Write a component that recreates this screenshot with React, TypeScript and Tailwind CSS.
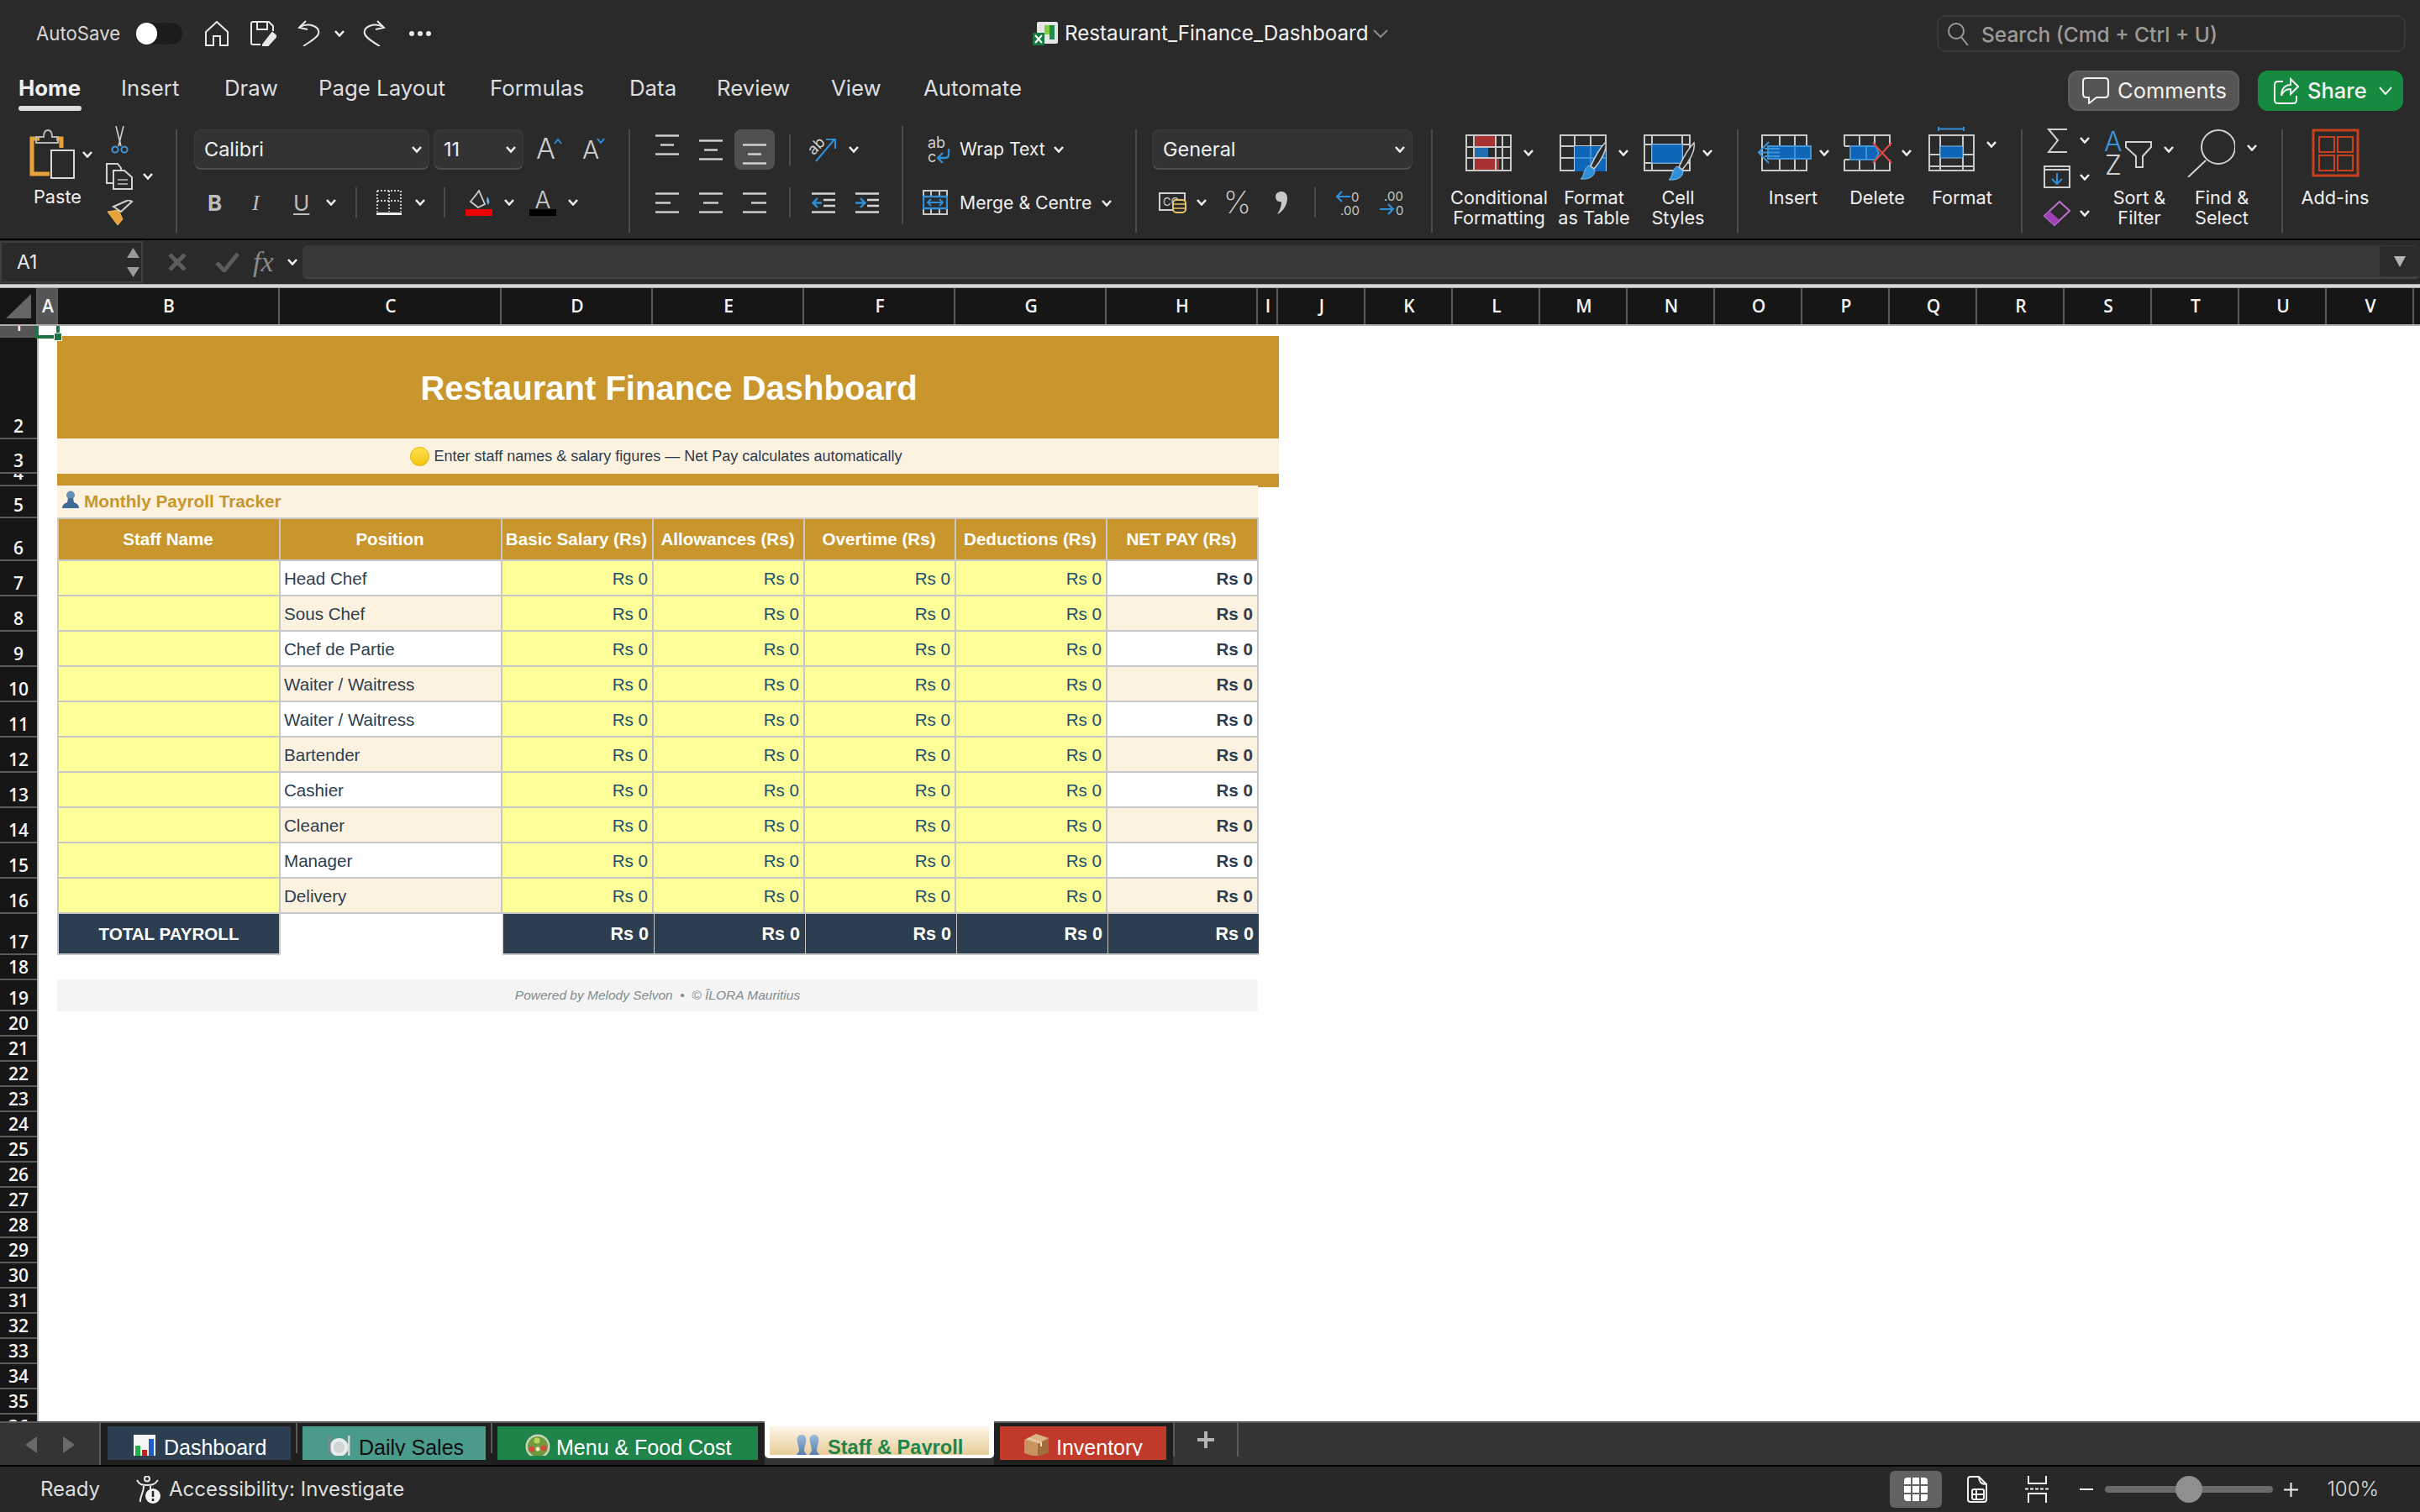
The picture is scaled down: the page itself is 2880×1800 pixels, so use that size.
import React from "react";

const Chev = ({ c = "" }: { c?: string }) => (
  <svg className={"w-[12px] h-[8px] shrink-0 " + c} viewBox="0 0 12 8" fill="none" stroke="#efefef" strokeWidth="2.6"><path d="M1 1 L6 6.5 L11 1" /></svg>
);
const L = "#d4d4d4";
const B = "#2f8fd8";
const Lines = ({ c, ws }: { c: string; ws: [number, number][] }) => (
  <svg className={"shrink-0 " + c} viewBox="0 0 28 25" fill="none" stroke={L} strokeWidth="2.4">
    {ws.map(([a, b], i) => <path key={i} d={`M${a} ${1.5 + i * 11} H${b}`} />)}
  </svg>
);
const VSep = ({ c }: { c: string }) => <div className={"w-[2px] shrink-0 bg-[#4c4c4c] " + c} />;
const RSep = ({ c = "mt-[4px]" }: { c?: string }) => <div className={"w-[2px] h-[123px] shrink-0 bg-[#4c4c4c] " + c} />;
const Combo = ({ c, t, p }: { c: string; t: string; p: string }) => (
  <div className={"h-[48px] shrink-0 rounded-[8px] bg-[#333333] border border-[#3c3c3c] border-b-[2px] border-b-[#4e4e4e] flex items-center justify-between text-[23.5px] text-[#f0f0f0] " + c + " " + p}>
    <span>{t}</span><Chev />
  </div>
);
const Grid = ({ x = 0, y = 0, w = 55, h = 44, vs, hs }: { x?: number; y?: number; w?: number; h?: number; vs: number[]; hs: number[] }) => (
  <g stroke="#c9c9c9" strokeWidth="2" fill="none">
    <rect x={x + 1} y={y + 1} width={w - 2} height={h - 2} />
    {vs.map((v) => <path key={"v" + v} d={`M${x + v} ${y} V${y + h}`} />)}
    {hs.map((v) => <path key={"h" + v} d={`M${x} ${y + v} H${x + w}`} />)}
  </g>
);
const Brush = ({ t }: { t: string }) => (
  <g transform={t}>
    <path d="M38 0 C40 10 31 24 24 32 L20 29 C24 20 31 7 38 0Z" fill="#2a2a2a" stroke="#cfcfcf" strokeWidth="1.6" />
    <path d="M18 28 L25 34 C25 41 18 45 8 44 C13 40 11 32 18 28Z" fill="#2f8fd8" stroke="#7fbdea" strokeWidth="1" />
  </g>
);
const BigBtn = ({ c, icon, lines, pt = "pt-[10px]", chev = true, gap = "gap-[14px]" }: { c: string; icon: React.ReactNode; lines: string[]; pt?: string; chev?: boolean; gap?: string }) => (
  <div className={"flex flex-col items-center shrink-0 " + c}>
    <div className={"h-[73px] flex items-start " + pt + " " + gap}>
      {icon}
      {chev && <Chev c="mt-[18px]" />}
    </div>
    {lines.map((l) => <div key={l} className="text-[21.7px] leading-[24px] text-[#eeeeee] whitespace-nowrap">{l}</div>)}
  </div>
);

/* emoji-like drawings */
const BarChart = () => (
  <svg className="w-[26px] h-[27px] shrink-0 -mt-[3px]" viewBox="0 0 26 27">
    <rect width="26" height="27" fill="#f4f6f8" />
    <rect x="2" y="13" width="6" height="14" fill="#1fb141" /><rect x="10" y="18" width="6" height="9" fill="#c9231f" /><rect x="18" y="5" width="6" height="22" fill="#1d5fc4" />
  </svg>
);
const Plate = () => (
  <svg className="w-[29px] h-[27px] shrink-0 -mt-[3px]" viewBox="0 0 29 27">
    <circle cx="14.5" cy="15" r="11" fill="#e8eaea" /><circle cx="14.5" cy="15" r="7.5" fill="#cfd4d4" stroke="#f7f7f7" />
    <rect x="1.5" y="2" width="3" height="25" fill="#7a8a8a" /><rect x="25" y="1" width="2.5" height="26" fill="#d0d8d8" />
  </svg>
);
const Salad = () => (
  <svg className="w-[30px] h-[30px] shrink-0 -mt-[3px]" viewBox="0 0 30 30">
    <circle cx="15" cy="15" r="14.5" fill="#c9d4b8" /><circle cx="15" cy="15" r="12" fill="#6f9a3e" />
    <circle cx="8" cy="18" r="3.5" fill="#d24a3c" /><circle cx="22" cy="17" r="3.5" fill="#d24a3c" /><circle cx="14" cy="8" r="3.5" fill="#b9d65a" /><circle cx="15" cy="18" r="2.5" fill="#e9efc0" />
  </svg>
);
const People = () => (
  <svg className="w-[29px] h-[28px] shrink-0 -mt-[3px]" viewBox="0 0 29 28">
    <defs><linearGradient id="pg" x1="0" y1="0" x2="0" y2="1"><stop offset="0" stopColor="#9dbcdc" /><stop offset="1" stopColor="#4a76a8" /></linearGradient></defs>
    <path d="M7 0 C12 0 13 5 12 9 C11 13 10 16 10 19 C11 22 14 24 14 27 H0 C0 24 3 22 4 19 C4 16 3 13 2 9 C1 5 2 0 7 0Z" fill="url(#pg)" />
    <path d="M22 0 C27 0 28 5 27 9 C26 13 25 16 25 19 C26 22 29 24 29 27 H15 C15 24 18 22 19 19 C19 16 18 13 17 9 C16 5 17 0 22 0Z" fill="url(#pg)" />
  </svg>
);
const Box = () => (
  <svg className="w-[31px] h-[28px] shrink-0 -mt-[4px]" viewBox="0 0 31 28">
    <path d="M1 7 L17 12 V28 L1 23Z" fill="#c8935c" /><path d="M17 12 L30 5 V22 L17 28Z" fill="#a36d3a" /><path d="M1 7 L15 0 L30 5 L17 12Z" fill="#dcb184" />
    <path d="M6 4.5 L22 10 V15 L20 15 V10.5 L5 5.5Z" fill="#eedcc4" />
  </svg>
);

const colHeads: [string, string][] = [["A", "w-[24px] bg-[#555555]"], ["B", "w-[264px]"], ["C", "w-[264px]"], ["D", "w-[180px]"], ["E", "w-[180px]"], ["F", "w-[180px]"], ["G", "w-[180px]"], ["H", "w-[180px]"], ["I", "w-[24px]"], ["J", "w-[104px]"], ["K", "w-[104px]"], ["L", "w-[104px]"], ["M", "w-[104px]"], ["N", "w-[104px]"], ["O", "w-[104px]"], ["P", "w-[104px]"], ["Q", "w-[104px]"], ["R", "w-[104px]"], ["S", "w-[104px]"], ["T", "w-[104px]"], ["U", "w-[104px]"], ["V", "w-[104px]"]];

const rowHeads: [number, string][] = [
  [1, "h-[14px] bg-[#555555]"], [2, "h-[121px]"], [3, "h-[41px]"], [4, "h-[15px]"], [5, "h-[38px]"], [6, "h-[51px]"],
  ...[7, 8, 9, 10, 11, 12, 13, 14, 15, 16].map((n) => [n, "h-[42px]"] as [number, string]),
  [17, "h-[49px]"], [18, "h-[30px]"], [19, "h-[37px]"],
  ...Array.from({ length: 17 }, (_, i) => [20 + i, "h-[30px]"] as [number, string]),
];

const positions = ["Head Chef", "Sous Chef", "Chef de Partie", "Waiter / Waitress", "Waiter / Waitress", "Bartender", "Cashier", "Cleaner", "Manager", "Delivery"];
const heads = ["Staff Name", "Position", "Basic Salary (Rs)", "Allowances (Rs)", "Overtime (Rs)", "Deductions (Rs)", "NET PAY (Rs)"];
const cols = "grid grid-cols-[264px_264px_180px_180px_180px_180px_180px]";
const cell = "border-r-2 border-b-2 border-[#c8c8c8] flex items-center";

const Rs = ({ alt }: { alt: boolean }) => (
  <>
    {[0, 1, 2, 3].map((i) => <div key={i} className={cell + " justify-end pr-[5px] pt-[2px] bg-[#ffff99] text-[#1a5276]"}>Rs 0</div>)}
    <div className={cell + " justify-end pr-[5px] pt-[2px] font-bold text-[#2c3e50] " + (alt ? "bg-[#fdf2df]" : "bg-white")}>Rs 0</div>
  </>
);

export default function App() {
  return (
    <div className="w-[2880px] h-[1800px] overflow-hidden bg-[#2a2a2a] flex flex-col font-['Inter',sans-serif] text-[#e8e8e8]">
      {/* Title bar */}
      <div className="h-[80px] shrink-0 flex items-center">
        <div className="w-[1229px] shrink-0 flex items-center">
          <span className="ml-[43px] w-[119px] shrink-0 text-[22.2px] text-[#d8d8d8] whitespace-nowrap">AutoSave</span>
          <div className="w-[55px] h-[26px] rounded-full bg-[#1c1c1c] flex items-center"><div className="w-[25px] h-[26px] rounded-full bg-white" /></div>
          <svg className="ml-[27px] w-[28px] h-[30px]" viewBox="0 0 28 30" fill="none" stroke="#e8e8e8" strokeWidth="2"><path d="M1 13 L14 1 L27 13 V29 H18 V18 H10 V29 H1Z" /></svg>
          <svg className="ml-[26px] w-[31px] h-[30px]" viewBox="0 0 31 30" fill="none" stroke="#e8e8e8" strokeWidth="2"><path d="M12 28 H3 Q1 28 1 26 V3 Q1 1 3 1 H22 L27 6 V12" /><path d="M8 1 V10 H20 V1" /><path d="M15 28 L26 14 L31 18 L20 30 L15 30Z" fill="#e8e8e8" /></svg>
          <svg className="ml-[25px] w-[27px] h-[31px]" viewBox="0 0 27 31" fill="none" stroke="#e8e8e8" strokeWidth="2"><path d="M10 1 L2 9 L12 11" /><path d="M3 8 C14 2 27 8 25 16 C24 21 14 26 7 31" /></svg>
          <Chev c="ml-[17px]" />
          <svg className="ml-[22px] w-[27px] h-[31px]" viewBox="0 0 27 31" fill="none" stroke="#e8e8e8" strokeWidth="2"><path d="M17 1 L25 9 L15 11" /><path d="M24 8 C13 2 0 8 2 16 C3 21 12 26 20 31" /></svg>
          <svg className="ml-[28px] w-[26px] h-[6px]" viewBox="0 0 26 6" fill="#e8e8e8"><circle cx="3" cy="3" r="3" /><circle cx="13" cy="3" r="3" /><circle cx="23" cy="3" r="3" /></svg>
        </div>
        <svg className="w-[30px] h-[28px] shrink-0" viewBox="0 0 30 28">
          <rect x="5" y="0" width="25" height="26" rx="2" fill="#e6e6e6" /><rect x="14" y="4" width="6" height="11" fill="#7fd13b" /><rect x="20" y="4" width="6" height="17" fill="#1f8a4c" /><rect x="0" y="13" width="14" height="15" rx="1" fill="#127a3f" />
          <path d="M3 16 L11 25 M11 16 L3 25" stroke="#fff" strokeWidth="2" />
        </svg>
        <span className="ml-[8px] w-[367px] shrink-0 text-[24.2px] text-[#f2f2f2] whitespace-nowrap">Restaurant_Finance_Dashboard</span>
        <svg className="w-[18px] h-[10px] shrink-0" viewBox="0 0 18 10" fill="none" stroke="#8a8a8a" strokeWidth="2"><path d="M1 1 L9 9 L17 1" /></svg>
        <div className="ml-auto mr-[17px] w-[558px] h-[44px] rounded-[10px] border-2 border-[#383838] flex items-center">
          <svg className="ml-[11px] w-[25px] h-[27px]" viewBox="0 0 25 27" fill="none" stroke="#9a9a9a" strokeWidth="2"><circle cx="10" cy="10" r="9" /><path d="M16 17 L24 27" /></svg>
          <span className="ml-[15px] pt-[2px] text-[24.5px] font-medium text-[#9b9b9b] whitespace-nowrap">Search (Cmd + Ctrl + U)</span>
        </div>
      </div>
      {/* Tabs */}
      <div className="h-[70px] shrink-0 flex pt-[4px] text-[25.8px] text-[#dedede]">
        <div className="ml-[22px] w-[75px] flex flex-col"><div className="h-[42px] flex items-center font-bold text-[#efefef]">Home</div><div className="h-[6px] rounded-full bg-[#dddddd]" /></div>
        <div className="ml-[47px] w-[72px] h-[42px] flex items-center">Insert</div>
        <div className="ml-[51px] w-[62px] h-[42px] flex items-center">Draw</div>
        <div className="ml-[50px] w-[151px] h-[42px] flex items-center whitespace-nowrap">Page Layout</div>
        <div className="ml-[53px] w-[114px] h-[42px] flex items-center">Formulas</div>
        <div className="ml-[52px] w-[56px] h-[42px] flex items-center">Data</div>
        <div className="ml-[48px] w-[87px] h-[42px] flex items-center">Review</div>
        <div className="ml-[49px] w-[60px] h-[42px] flex items-center">View</div>
        <div className="ml-[50px] w-[118px] h-[42px] flex items-center">Automate</div>
        <div className="ml-auto mr-[20px] flex gap-[22px]">
          <div className="w-[204px] h-[48px] rounded-[12px] bg-[#555555] border-2 border-[#5f5f5f] flex items-center text-[#f2f2f2]">
            <svg className="ml-[15px] w-[32px] h-[32px]" viewBox="0 0 32 32" fill="none" stroke="#f0f0f0" strokeWidth="2"><path d="M5 1 H27 Q31 1 31 5 V20 Q31 24 27 24 H17 L8 31 V24 H5 Q1 24 1 20 V5 Q1 1 5 1Z" /></svg>
            <span className="ml-[10px] text-[25.5px]">Comments</span>
          </div>
          <div className="w-[173px] h-[48px] rounded-[12px] bg-[#168a3e] flex items-center text-[#f4f4f4]">
            <svg className="ml-[19px] w-[30px] h-[32px]" viewBox="0 0 30 32" fill="none" stroke="#f0f0f0" strokeWidth="2"><path d="M11 5 H5 Q1 5 1 9 V27 Q1 31 5 31 H23 Q27 31 27 27 V22" /><path d="M9 22 C9 12 15 9 20 9 V2 L29 11 L20 20 V14 C15 14 11 16 9 22Z" /></svg>
            <span className="ml-[10px] text-[25.5px] font-medium">Share</span>
            <svg className="ml-[14px] w-[16px] h-[10px]" viewBox="0 0 16 10" fill="none" stroke="#f0f0f0" strokeWidth="2"><path d="M1 1 L8 9 L15 1" /></svg>
          </div>
        </div>
      </div>
      {/* Ribbon */}
      <div className="h-[134px] shrink-0 flex overflow-hidden">
        {/* Clipboard */}
        <div className="w-[209px] shrink-0 flex">
          <div className="ml-[30px] w-[58px] shrink-0 flex flex-col items-start">
            <svg className="ml-[5px] mt-[4px] w-[54px] h-[59px] overflow-visible" viewBox="0 0 54 59" fill="none">
              <path d="M12 11 H3 V53 H24" stroke="#e8a23a" strokeWidth="5" /><path d="M32 11 H38 V22" stroke="#e8a23a" strokeWidth="5" />
              <path d="M8 16 V9 H17 Q17 1 22 1 Q27 1 27 9 H34 V16Z" stroke="#b5b5b5" strokeWidth="2" />
              <rect x="26" y="25" width="27" height="33" stroke="#d9d9d9" strokeWidth="2" fill="#2a2a2a" />
            </svg>
            <span className="mt-[9px] ml-[10px] text-[21.7px] leading-[24px] text-[#eeeeee]">Paste</span>
          </div>
          <Chev c="ml-[10px] mt-[30px]" />
          <div className="ml-[16px] w-[60px] shrink-0 flex flex-col">
            <svg className="ml-[6px] mt-0 w-[21px] h-[33px]" viewBox="0 0 21 33" fill="none"><path d="M6 0 L12 24 M15 0 L9 24" stroke="#d2d2d2" strokeWidth="1.6" /><circle cx="5" cy="28" r="3.6" stroke="#3d94d6" strokeWidth="2" /><circle cx="16" cy="28" r="3.6" stroke="#3d94d6" strokeWidth="2" /></svg>
            <div className="mt-[11px] flex items-center">
              <svg className="w-[32px] h-[32px]" viewBox="0 0 32 32" fill="none" stroke="#d2d2d2" strokeWidth="2"><path d="M8 24 H1 V1 H14 L18 6 V9" /><path d="M9 9 H22 L31 17 V31 H9Z" /><path d="M14 20 H26 M14 25 H26" stroke="#999" /></svg>
              <Chev c="ml-[12px]" />
            </div>
            <svg className="mt-[12px] ml-[1px] w-[32px] h-[30px]" viewBox="0 0 32 30"><path d="M1 14 L13 30 L19 23 L14 12Z" fill="#e8a23a" stroke="#f0b95a" /><path d="M8 8 L17 14 L30 2 L26 0Z" fill="#2a2a2a" stroke="#d2d2d2" strokeWidth="2" /></svg>
          </div>
        </div>
        <RSep />
        {/* Font */}
        <div className="w-[537px] shrink-0 flex flex-col pt-[4px]">
          <div className="h-[48px] flex items-center">
            <Combo c="ml-[20px] w-[280px]" t="Calibri" p="pl-[11px] pr-[8px]" />
            <Combo c="ml-[5px] w-[107px]" t="11" p="pl-[11px] pr-[8px]" />
            <svg className="ml-[15px] w-[31px] h-[30px] overflow-visible" viewBox="0 0 31 30"><text x="0" y="26" fontSize="34" fontWeight="300" fill="#cfcfcf" fontFamily="Inter">A</text><path d="M22 8 L26 3 L30 8" fill="none" stroke={B} strokeWidth="2" /></svg>
            <svg className="ml-[24px] w-[27px] h-[30px] overflow-visible" viewBox="0 0 27 30"><text x="0" y="26" fontSize="30" fontWeight="300" fill="#cfcfcf" fontFamily="Inter">A</text><path d="M18 2 L22 7 L26 2" fill="none" stroke={B} strokeWidth="2" /></svg>
          </div>
          <div className="mt-[15px] h-[48px] flex items-center">
            <span className="ml-[36px] w-[15px] text-[26px] font-bold text-[#bdbdbd]">B</span>
            <span className="ml-[38px] w-[12px] text-[26px] italic font-['Liberation_Serif',serif] text-[#bdbdbd]">I</span>
            <span className="ml-[37px] w-[17px] text-[26px] underline underline-offset-[3px] text-[#bdbdbd]">U</span>
            <Chev c="ml-[22px]" />
            <VSep c="ml-[23px] h-[36px]" />
            <svg className="ml-[23px] w-[30px] h-[30px]" viewBox="0 0 30 30" fill="none"><path d="M1 1 H29 V26 M1 1 V26 M15 1 V26 M1 13 H29" stroke="#c9c9c9" strokeWidth="2" strokeDasharray="2 2" /><path d="M0 28.5 H30" stroke="#eeeeee" strokeWidth="3" /></svg>
            <Chev c="ml-[16px]" />
            <VSep c="ml-[22px] h-[36px]" />
            <svg className="ml-[24px] w-[32px] h-[31px]" viewBox="0 0 32 31" fill="none"><path d="M16 1 L23 17 L15 21 L6 14 L14 4Z" stroke="#d0d0d0" strokeWidth="1.8" /><path d="M26 8 Q30 14 27 18 Q24 14 26 8Z" fill="#6db3e8" /><rect x="0" y="23" width="32" height="8" fill="#ee0000" /></svg>
            <Chev c="ml-[14px]" />
            <div className="ml-[18px] w-[32px] h-[31px] flex flex-col items-center">
              <span className="h-[23px] text-[28px] leading-[24px] font-light text-[#cfcfcf]">A</span>
              <div className="w-[32px] h-[8px] bg-black" />
            </div>
            <Chev c="ml-[14px]" />
          </div>
        </div>
        <RSep />
        {/* Alignment */}
        <div className="w-[323px] shrink-0 flex flex-col pt-[4px]">
          <div className="h-[48px] flex items-center">
            <Lines c="ml-[30px] w-[28px] h-[25px] -mt-[12px]" ws={[[0, 28], [6, 22], [0, 28]]} />
            <Lines c="ml-[24px] w-[28px] h-[25px]" ws={[[0, 28], [6, 22], [0, 28]]} />
            <div className="ml-[14px] w-[48px] h-[48px] rounded-[8px] bg-[#505050] flex items-center justify-center">
              <Lines c="w-[28px] h-[25px] mt-[10px]" ws={[[0, 28], [6, 22], [0, 28]]} />
            </div>
            <VSep c="ml-[17px] h-[37px]" />
            <svg className="ml-[22px] w-[34px] h-[30px]" viewBox="0 0 34 30" fill="none"><text x="0" y="18" transform="rotate(-45 8 14)" fontSize="18" fill="#d2d2d2" fontFamily="Inter">ab</text><path d="M8 29 L30 3 M20 3 H31 V14" stroke={B} strokeWidth="2" /></svg>
            <Chev c="ml-[13px]" />
          </div>
          <div className="mt-[15px] h-[48px] flex items-center">
            <Lines c="ml-[30px] w-[28px] h-[25px]" ws={[[0, 28], [0, 18], [0, 28]]} />
            <Lines c="ml-[24px] w-[28px] h-[25px]" ws={[[0, 28], [5, 23], [0, 28]]} />
            <Lines c="ml-[24px] w-[28px] h-[25px]" ws={[[0, 28], [10, 28], [0, 28]]} />
            <VSep c="ml-[27px] h-[36px]" />
            <svg className="ml-[25px] w-[28px] h-[25px]" viewBox="0 0 28 25" fill="none"><path d="M0 1.5 H28 M0 23.5 H28 M14 9 H28 M14 16 H28" stroke={L} strokeWidth="2.4" /><path d="M12 12.5 H2 M7 7 L1.5 12.5 L7 18" stroke={B} strokeWidth="2.4" /></svg>
            <svg className="ml-[24px] w-[28px] h-[25px]" viewBox="0 0 28 25" fill="none"><path d="M0 1.5 H28 M0 23.5 H28 M14 9 H28 M14 16 H28" stroke={L} strokeWidth="2.4" /><path d="M0 12.5 H11 M6 7 L11.5 12.5 L6 18" stroke={B} strokeWidth="2.4" /></svg>
          </div>
        </div>
        <RSep c="-mt-[6px] h-[123px]" />
        {/* Wrap */}
        <div className="w-[276px] shrink-0 flex flex-col pt-[4px] text-[21.2px] text-[#eeeeee]">
          <div className="h-[48px] flex items-center">
            <svg className="ml-[28px] w-[28px] h-[32px]" viewBox="0 0 28 32" fill="none"><text x="1" y="14" fontSize="18" fill="#d0d0d0" fontFamily="Inter">ab</text><text x="1" y="31" fontSize="18" fill="#d0d0d0" fontFamily="Inter">c</text><path d="M26 15 V22 Q26 26 22 26 H14 M19 20 L13 26 L19 32" stroke={B} strokeWidth="2.4" /></svg>
            <span className="ml-[11px] w-[101px] whitespace-nowrap">Wrap Text</span>
            <Chev c="ml-[11px]" />
          </div>
          <div className="mt-[16px] h-[48px] flex items-center">
            <svg className="ml-[23px] w-[30px] h-[30px] -mt-[2px]" viewBox="0 0 30 30" fill="none"><path d="M1 1 H29 V29 H1Z M1 8 H29 M1 22 H29 M10 1 V8 M20 1 V8 M10 22 V29 M20 22 V29" stroke="#c9c9c9" strokeWidth="2" /><rect x="1" y="8" width="28" height="14" stroke={B} strokeWidth="2.4" /><path d="M6 15 H24 M10 11 L6 15 L10 19 M20 11 L24 15 L20 19" stroke={B} strokeWidth="2" /></svg>
            <span className="ml-[14px] w-[158px] whitespace-nowrap">Merge &amp; Centre</span>
            <Chev c="ml-[11px]" />
          </div>
        </div>
        <RSep />
        {/* Number */}
        <div className="w-[350px] shrink-0 flex flex-col pt-[4px]">
          <Combo c="ml-[18px] w-[310px]" t="General" p="pl-[12px] pr-[8px]" />
          <div className="mt-[15px] h-[48px] flex items-center">
            <svg className="ml-[26px] w-[33px] h-[25px]" viewBox="0 0 33 25" fill="none"><rect x="1" y="1" width="30" height="20" stroke="#d0d0d0" strokeWidth="2" /><text x="5" y="16" fontSize="13" fill="#d0d0d0" fontFamily="Inter">CC</text><rect x="17" y="9" width="15" height="15" rx="4" fill="#2a2a2a" stroke="#e8c36a" strokeWidth="2" /><path d="M17 14 H32 M17 19 H32" stroke="#e8c36a" strokeWidth="1.5" /></svg>
            <Chev c="ml-[12px]" />
            <span className="ml-[20px] w-[31px] text-[37px] leading-[40px] font-extralight text-[#d4d4d4]">%</span>
            <svg className="ml-[29px] w-[17px] h-[27px]" viewBox="0 0 17 27"><path d="M2 6 C2 2 6 0 9 0 C13 0 16 3 16 8 C16 16 11 24 4 27 C8 21 9 16 9 12 C5 13 2 10 2 6Z" fill="#c8c8c8" /></svg>
            <VSep c="ml-[31px] h-[36px]" />
            <svg className="ml-[23px] w-[31px] h-[31px]" viewBox="0 0 31 31" fill="none"><path d="M18 8 H2 M8 2 L2 8 L8 14" stroke={B} strokeWidth="2.2" /><text x="19" y="14" fontSize="15" fill="#c8c8c8" fontFamily="Inter">0</text><text x="6" y="30" fontSize="15" fill="#c8c8c8" fontFamily="Inter">.00</text></svg>
            <svg className="ml-[21px] w-[31px] h-[31px]" viewBox="0 0 31 31" fill="none"><text x="6" y="13" fontSize="15" fill="#c8c8c8" fontFamily="Inter">.00</text><path d="M1 23 H17 M11 17 L17 23 L11 29" stroke={B} strokeWidth="2.2" /><text x="20" y="30" fontSize="15" fill="#c8c8c8" fontFamily="Inter">0</text></svg>
          </div>
        </div>
        <RSep />
        {/* Styles */}
        <div className="w-[362px] shrink-0 flex pl-[9px]">
          <BigBtn c="w-[140px]" lines={["Conditional", "Formatting"]} icon={
            <svg className="w-[55px] h-[44px]" viewBox="0 0 55 44"><rect x="10" y="0" width="25" height="15" fill="#a83232" /><rect x="10" y="15" width="17" height="13" fill="#1f6fb0" /><rect x="10" y="28" width="30" height="16" fill="#a83232" /><Grid vs={[10, 36, 44]} hs={[15, 28]} /></svg>
          } />
          <BigBtn c="w-[86px]" lines={["Format", "as Table"]} icon={
            <svg className="w-[58px] h-[54px] overflow-visible" viewBox="0 0 58 54"><Grid w={56} vs={[18, 37]} hs={[14, 28]} /><rect x="18" y="14" width="37" height="30" fill="#0f66b8" /><path d="M37 14 V44 M18 28 H55" stroke="#4f9ce0" strokeWidth="1.5" /><Brush t="translate(17,9)" /></svg>
          } gap="gap-[12px]" />
          <BigBtn c="w-[114px]" lines={["Cell", "Styles"]} icon={
            <svg className="w-[60px] h-[54px] overflow-visible" viewBox="0 0 60 54"><Grid w={56} vs={[10, 46]} hs={[12, 34]} /><rect x="10" y="12" width="36" height="22" fill="#0f66b8" stroke="#4f9ce0" /><Brush t="translate(22,10)" /></svg>
          } gap="gap-[10px]" />
        </div>
        <RSep />
        {/* Cells */}
        <div className="w-[336px] shrink-0 flex pl-[15px]">
          <BigBtn c="w-[100px]" lines={["Insert"]} icon={
            <svg className="w-[63px] h-[44px] overflow-visible" viewBox="0 0 63 44"><Grid x={4} w={55} vs={[22, 40]} hs={[]} /><rect x="12" y="14" width="51" height="15" fill="#0f66b8" stroke="#3d94d6" strokeWidth="2" /><path d="M44 14 V29" stroke="#3d94d6" strokeWidth="2" /><path d="M26 21.5 H2 M13 9 L1 21.5 L13 34 M26 17 H8 M26 26 H8" stroke="#3d94d6" strokeWidth="2" fill="none" /></svg>
          } gap="gap-[10px]" />
          <BigBtn c="w-[100px]" lines={["Delete"]} icon={
            <svg className="w-[59px] h-[44px]" viewBox="0 0 59 44"><path d="M55 14 V1 H1 V14 M55 30 V43 H1 V30 M19 1 V14 M37 1 V14 M19 30 V43 M37 30 V43 M1 14 H8 M1 30 H8" stroke="#c9c9c9" strokeWidth="2" fill="none" /><path d="M8 14 H38 L42 22 L38 30 H8Z" fill="#0f66b8" stroke="#3d94d6" strokeWidth="2" /><path d="M27 14 V30" stroke="#3d94d6" strokeWidth="2" /><path d="M35 10 L57 34 M57 10 L35 34" stroke="#e04848" strokeWidth="2" /></svg>
          } gap="gap-[10px]" />
          <BigBtn c="w-[102px]" lines={["Format"]} pt="pt-0" icon={
            <svg className="w-[55px] h-[54px]" viewBox="0 0 55 54"><path d="M12 1 V6 M12 3.5 H42 M42 1 V6" stroke={B} strokeWidth="2" fill="none" /><Grid y={10} vs={[14, 41]} hs={[24, 38]} /><rect x="14" y="24" width="27" height="14" fill="#0f66b8" stroke="#7fbdea" /></svg>
          } gap="gap-[14px]" />
        </div>
        <RSep />
        {/* Editing */}
        <div className="w-[308px] shrink-0 flex">
          <div className="ml-[25px] w-[58px] shrink-0 flex flex-col">
            <div className="h-[30px] mt-[2px] flex items-center">
              <svg className="ml-[4px] w-[25px] h-[29px]" viewBox="0 0 25 29" fill="none" stroke="#d2d2d2" strokeWidth="2"><path d="M24 1 H2 L13 14 L2 28 H24" /></svg><Chev c="ml-[14px]" />
            </div>
            <div className="h-[27px] mt-[15px] flex items-center">
              <svg className="w-[32px] h-[27px]" viewBox="0 0 32 27" fill="none"><rect x="1" y="1" width="30" height="25" stroke="#cfcfcf" strokeWidth="2" /><path d="M1 5 H31" stroke="#cfcfcf" strokeWidth="2" /><path d="M16 9 V22 M10 16 L16 22 L22 16" stroke={B} strokeWidth="2" /></svg>
              <Chev c="ml-[11px]" />
            </div>
            <div className="h-[30px] mt-[15px] flex items-center">
              <svg className="w-[32px] h-[30px]" viewBox="0 0 32 30"><path d="M19 1 L31 12 L13 29 L1 18Z" fill="none" stroke="#c070d0" strokeWidth="2" /><path d="M7 12 L19 23 L13 29 L1 18Z" fill="#a040b8" /></svg>
              <Chev c="ml-[11px]" />
            </div>
          </div>
          <BigBtn c="w-[112px]" lines={["Sort &", "Filter"]} pt="pt-[6px]" icon={
            <svg className="w-[56px] h-[54px] overflow-visible" viewBox="0 0 56 54" fill="none">
              <text x="-1" y="24" fontSize="32" fontWeight="300" fill="#3d94d6" fontFamily="Inter">A</text>
              <text x="0" y="52" fontSize="32" fontWeight="300" fill="#d2d2d2" fontFamily="Inter">Z</text>
              <path d="M25 13 H55 V19 L45 30 V43 H37 V30 L25 19Z" stroke="#d2d2d2" strokeWidth="2" />
            </svg>
          } gap="gap-[14px]" />
          <BigBtn c="w-[84px]" lines={["Find &", "Select"]} pt="pt-[4px]" icon={
            <svg className="w-[57px] h-[57px]" viewBox="0 0 57 57" fill="none" stroke="#d2d2d2" strokeWidth="2"><ellipse cx="37" cy="21" rx="20" ry="20" /><path d="M22 37 L1 57" /></svg>
          } gap="gap-[14px]" />
        </div>
        <RSep />
        {/* Add-ins */}
        <BigBtn c="w-[124px]" lines={["Add-ins"]} chev={false} pt="pt-[3px]" icon={
          <svg className="w-[57px] h-[58px]" viewBox="0 0 57 58" fill="none" stroke="#c8401e" strokeWidth="3"><rect x="2" y="2" width="53" height="54" /><rect x="9" y="10" width="18" height="18" strokeWidth="2" /><rect x="31" y="10" width="18" height="18" strokeWidth="2" /><rect x="9" y="32" width="18" height="18" strokeWidth="2" /><rect x="31" y="32" width="18" height="18" strokeWidth="2" /></svg>
        } />
      </div>
      <div className="h-[2px] shrink-0 bg-black" />
      {/* Formula bar */}
      <div className="h-[52px] shrink-0 flex items-center">
        <div className="w-[170px] h-[50px] shrink-0 border-2 border-[#3f3f3f] flex items-center">
          <span className="ml-[18px] text-[23px] text-[#e8e8e8]">A1</span>
          <div className="ml-auto mr-[2px] flex flex-col gap-[11px]">
            <svg className="w-[15px] h-[12px]" viewBox="0 0 15 12" fill="#9a9a9a"><path d="M7.5 0 L15 12 H0Z" /></svg>
            <svg className="w-[15px] h-[12px]" viewBox="0 0 15 12" fill="#9a9a9a"><path d="M7.5 12 L15 0 H0Z" /></svg>
          </div>
        </div>
        <svg className="ml-[30px] w-[22px] h-[20px]" viewBox="0 0 22 20" fill="none" stroke="#5c5c5c" strokeWidth="5"><path d="M2 1 L20 19 M20 1 L2 19" /></svg>
        <svg className="ml-[34px] w-[29px] h-[24px]" viewBox="0 0 29 24" fill="none" stroke="#5c5c5c" strokeWidth="5"><path d="M2 13 L11 22 L27 2" /></svg>
        <span className="ml-[16px] w-[32px] font-['Liberation_Serif',serif] italic text-[34px] leading-[36px] text-[#8a8a8a]">fx</span>
        <Chev c="ml-[9px]" />
        <div className="ml-[6px] flex-1 h-[40px] rounded-[6px] bg-[#383838] border-b-2 border-[#444444] flex items-center justify-end">
          <div className="w-[48px] h-[36px] rounded-[4px] bg-[#2c2c2c] flex items-center justify-center">
            <svg className="w-[14px] h-[13px]" viewBox="0 0 14 13" fill="#b5b5b5"><path d="M7 13 L14 0 H0Z" /></svg>
          </div>
        </div>
      </div>
      <div className="h-[5px] shrink-0 bg-[#d8d8d8] border-y border-[#a8a8a8]" />
      {/* Column headers */}
      <div className="h-[45px] shrink-0 flex bg-[#161616] border-b-2 border-[#adadad] text-[21px] font-semibold text-[#f4f4f4] font-['Open_Sans',sans-serif]">
        <div className="w-[45px] shrink-0 border-r-2 border-[#5c5c5c] flex items-center justify-center">
          <svg className="w-[30px] h-[29px]" viewBox="0 0 30 29" fill="#666666"><path d="M30 0 V29 H0Z" /></svg>
        </div>
        {colHeads.map(([n, c]) => (
          <div key={n} className={"shrink-0 flex items-center justify-center pl-[2px] border-r-2 border-[#5c5c5c] " + c}>{n}</div>
        ))}
      </div>
      {/* Sheet */}
      <div className="flex-1 min-h-0 flex overflow-hidden bg-white relative">
        <div className="w-[46px] shrink-0 border-r-2 border-[#b5b5b5] bg-[#161616] flex flex-col overflow-hidden text-[21px] font-semibold text-[#f4f4f4] font-['Open_Sans',sans-serif]">
          {rowHeads.map(([n, c]) => (
            <div key={n} className={"w-full shrink-0 overflow-hidden flex flex-col justify-end items-center border-b-2 border-[#5a5a5a] " + c}>
              <span className="leading-[27px] h-[27px] shrink-0">{n}</span>
            </div>
          ))}
        </div>
        <div className="flex-1 min-w-0 pl-[22px] pt-[12px] font-['Liberation_Sans',Arial,sans-serif]">
          <div className="w-[1454px] h-[122px] bg-[#c8962c] flex items-center justify-center pl-[2px] pt-[1px] text-[40px] font-bold text-white">Restaurant Finance Dashboard</div>
          <div className="w-[1454px] h-[42px] bg-[#fdf2df] pr-[29px] flex items-center justify-center text-[18px] text-[#2c3e50]">
            <span className="w-[23px] h-[23px] rounded-full bg-gradient-to-b from-[#ffe24a] to-[#f5c400] border border-[#e2b100] mr-[6px]" />
            Enter staff names &amp; salary figures — Net Pay calculates automatically
          </div>
          <div className="w-[1454px] h-[14px] bg-[#c8962c]" />
          <div className="flex">
            <div className="w-[1429px] h-[38px] bg-[#fdf2df] flex items-center text-[20.8px] font-bold text-[#c8962c]">
              <svg className="ml-[6px] w-[20px] h-[21px] -mt-[5px]" viewBox="0 0 20 21"><circle cx="10" cy="5.5" r="5" fill="#6a8fb5" /><path d="M7 9 H13 L14 14 Q20 16 20 21 H0 Q0 16 6 14Z" fill="#3f6a96" /></svg>
              <span className="ml-[6px]">Monthly Payroll Tracker</span>
            </div>
            <div className="w-[25px] h-[2px] bg-[#c8962c]" />
          </div>
          <div className="w-[1430px] border-l-2 border-t-2 border-[#c8c8c8] text-[20.6px]">
            <div className={cols + " h-[50px]"}>
              {heads.map((h) => <div key={h} className={cell + " justify-center pr-[2px] pt-[1px] bg-[#c8962c] font-bold text-white whitespace-nowrap"}>{h}</div>)}
            </div>
            {positions.map((p, i) => {
              const alt = i % 2 === 1;
              return (
                <div key={i} className={cols + " h-[42px]"}>
                  <div className={cell + " bg-[#ffff99]"} />
                  <div className={cell + " pl-[4px] pt-[2px] text-[#2c3e50] " + (alt ? "bg-[#fdf2df]" : "bg-white")}>{p}</div>
                  <Rs alt={alt} />
                </div>
              );
            })}
            <div className={cols + " h-[49px]"}>
              <div className="bg-[#2c3e50] border-r-2 border-b-2 border-[#c8c8c8] flex items-center justify-center pt-[2px] font-bold text-white">TOTAL PAYROLL</div>
              <div className="bg-white" />
              {[0, 1, 2, 3, 4].map((i) => (
                <div key={i} className="bg-[#2c3e50] border-l border-b-2 border-[#c8c8c8] flex items-center justify-end pr-[6px] pt-[2px] text-[21.5px] font-bold text-white">Rs 0</div>
              ))}
            </div>
          </div>
          <div className="w-[1429px] h-[38px] mt-[29px] bg-[#f4f4f4] flex items-center justify-center italic text-[15.5px] text-[#7f8c8d] whitespace-pre">Powered by Melody Selvon  •  © ÎLORA Mauritius</div>
        </div>
        {/* A1 selection */}
        <div className="absolute left-[42px] top-[-4px] w-[29px] h-[19px] border-[4px] border-[#1f7244]" />
        <div className="absolute left-[64px] top-[8px] w-[10px] h-[10px] bg-[#1f7244] border border-white" />
      </div>
      {/* Sheet tabs */}
      <div className="h-[52px] shrink-0 flex text-[25px] font-['Liberation_Sans',Arial,sans-serif]">
        <div className="w-[120px] shrink-0 bg-[#343434] border-t-2 border-r-2 border-[#5a5a5a] flex items-start pt-[16px]">
          <svg className="ml-[30px] w-[14px] h-[20px]" viewBox="0 0 14 20" fill="#6a6a6a"><path d="M14 0 V20 L0 10Z" /></svg>
          <svg className="ml-[31px] w-[14px] h-[20px]" viewBox="0 0 14 20" fill="#6a6a6a"><path d="M0 0 V20 L14 10Z" /></svg>
        </div>
        <div className="w-[790px] shrink-0 bg-[#1f1f1f] border-t-2 border-[#5a5a5a] flex items-start pt-[4px]">
          <div className="ml-[8px] w-[218px] h-[40px] bg-[#2c3e50] text-white">
            <div className="h-[35px] overflow-hidden"><div className="pt-[11px] pl-[31px] flex items-center leading-[28px]"><BarChart /><span className="ml-[10px]">Dashboard</span></div></div>
          </div>
          <div className="ml-[6px] w-[2px] h-[36px] -mt-[4px] bg-[#5a5a5a]" />
          <div className="ml-[6px] w-[218px] h-[40px] bg-[#4a9b8c] text-[#0e0e0e]">
            <div className="h-[35px] overflow-hidden"><div className="pt-[11px] pl-[29px] flex items-center leading-[28px]"><Plate /><span className="ml-[9px]">Daily Sales</span></div></div>
          </div>
          <div className="ml-[6px] w-[2px] h-[36px] -mt-[4px] bg-[#5a5a5a]" />
          <div className="ml-[6px] w-[310px] h-[40px] bg-[#1e8449] text-white">
            <div className="h-[35px] overflow-hidden"><div className="pt-[11px] pl-[33px] flex items-center leading-[28px]"><Salad /><span className="ml-[7px] whitespace-nowrap">Menu &amp; Food Cost</span></div></div>
          </div>
        </div>
        <div className="w-[273px] shrink-0 bg-[#343434]">
          <div className="h-[44px] rounded-b-[5px] bg-white px-[6px] pt-[6px]">
            <div className="h-[34px] bg-gradient-to-b from-[#fbf5e8] to-[#e8cd9a] overflow-hidden text-[#1e8449] font-bold text-[23.6px]">
              <div className="pt-[11px] pl-[31px] flex items-center leading-[28px]"><People /><span className="ml-[9px] whitespace-nowrap">Staff &amp; Payroll</span></div>
            </div>
          </div>
        </div>
        <div className="w-[213px] shrink-0 bg-[#1f1f1f] border-t-2 border-[#5a5a5a] pt-[4px]">
          <div className="ml-[7px] w-[198px] h-[40px] bg-[#c0392b] text-white">
            <div className="h-[35px] overflow-hidden"><div className="pt-[11px] pl-[28px] flex items-center leading-[28px]"><Box /><span className="ml-[8px]">Inventory</span></div></div>
          </div>
        </div>
        <div className="flex-1 bg-[#343434] border-t-2 border-[#5a5a5a] flex items-start">
          <div className="w-[2px] h-[40px] bg-[#5a5a5a]" />
          <div className="w-[74px] h-[40px] flex items-center justify-center">
            <svg className="w-[20px] h-[20px]" viewBox="0 0 20 20" fill="#b5b5b5"><path d="M8 0 H12 V8 H20 V12 H12 V20 H8 V12 H0 V8 H8Z" /></svg>
          </div>
          <div className="w-[2px] h-[40px] bg-[#5a5a5a]" />
        </div>
      </div>
      <div className="h-[2px] shrink-0 bg-black" />
      {/* Status bar */}
      <div className="h-[54px] shrink-0 bg-[#282828] flex items-center text-[24px] text-[#dedede]">
        <span className="ml-[48px] w-[69px] shrink-0">Ready</span>
        <svg className="ml-[45px] w-[29px] h-[33px] shrink-0" viewBox="0 0 29 33" fill="none" stroke="#e8e8e8" strokeWidth="2"><circle cx="13" cy="3.5" r="3" /><path d="M1 5 C4 11 8 11 13 11 C18 11 22 11 26 5 M9 12 C9 20 4 26 5 31 M17 12 L17 17" /><circle cx="20" cy="24" r="9" fill="#f2f2f2" stroke="none" /><path d="M20 18 V25 M20 27 V30" stroke="#282828" strokeWidth="2.6" /></svg>
        <span className="ml-[10px] whitespace-nowrap">Accessibility: Investigate</span>
        <div className="ml-auto w-[62px] h-[44px] rounded-[6px] bg-[#636363] flex items-center justify-center">
          <svg className="w-[28px] h-[28px]" viewBox="0 0 28 28" fill="#ffffff"><path d="M4 0 H8 V8 H0 V4 Q0 0 4 0Z M10 0 H18 V8 H10Z M20 0 H24 Q28 0 28 4 V8 H20Z M0 10 H8 V18 H0Z M10 10 H18 V18 H10Z M20 10 H28 V18 H20Z M0 20 H8 V28 H4 Q0 28 0 24Z M10 20 H18 V28 H10Z M20 20 H28 V24 Q28 28 24 28 H20Z" /></svg>
        </div>
        <svg className="ml-[30px] w-[24px] h-[32px]" viewBox="0 0 24 32" fill="none" stroke="#f0f0f0" strokeWidth="2"><path d="M14 1 H4 Q1 1 1 4 V28 Q1 31 4 31 H20 Q23 31 23 28 V10Z M14 1 Q14 10 23 10" /><rect x="6" y="16" width="14" height="12" rx="2" /><path d="M6 22 H20 M11 16 V28" /></svg>
        <svg className="ml-[45px] w-[29px] h-[32px]" viewBox="0 0 29 32" fill="none" stroke="#f0f0f0" strokeWidth="2"><path d="M4 0 V9 H25 V0 M4 32 V21 H25 V32" /><path d="M0 15.5 H29" strokeDasharray="4 2" /></svg>
        <div className="ml-[36px] w-[16px] h-[2px] bg-[#f0f0f0]" />
        <div className="ml-[14px] w-[200px] h-[8px] rounded-full bg-[#6a6a6a] relative">
          <div className="absolute left-[84px] top-[-12px] w-[32px] h-[32px] rounded-full bg-[#8f8f8f]" />
        </div>
        <svg className="ml-[13px] w-[17px] h-[17px]" viewBox="0 0 17 17" fill="none" stroke="#f0f0f0" strokeWidth="2"><path d="M8.5 0 V17 M0 8.5 H17" /></svg>
        <span className="ml-[34px] mr-[49px] text-[24px] font-light">100%</span>
      </div>
    </div>
  );
}
